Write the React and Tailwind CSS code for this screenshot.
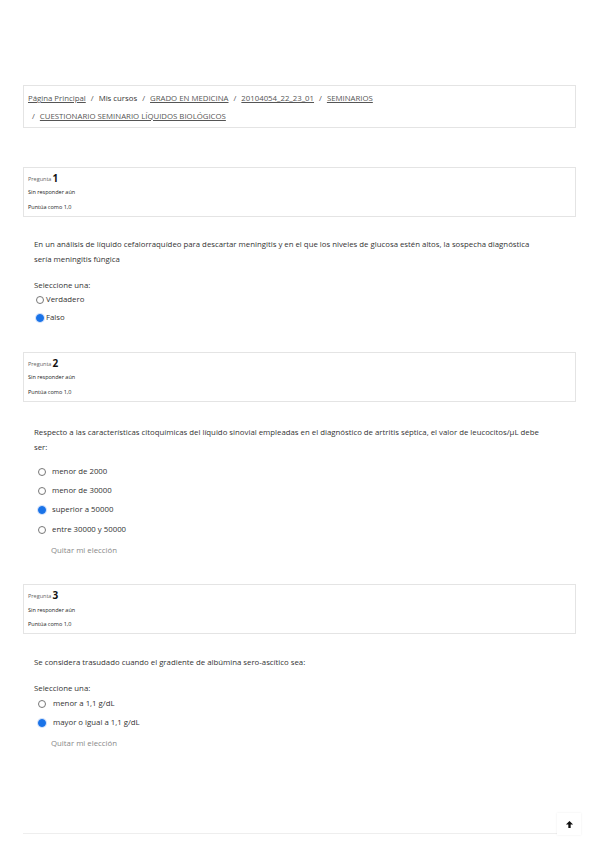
import React from "react";

const font = { fontFamily: '"Open Sans", "Noto Sans", sans-serif' };

function Radio({ checked }) {
  return checked ? (
    <span className="inline-block w-[8px] h-[8px] rounded-full bg-[#1a73e8] border border-[#1a73e8] shadow-[0_0_0_1px_#cfe0fb] shrink-0" />
  ) : (
    <span className="inline-block w-[8px] h-[8px] rounded-full border border-[#777] bg-white shrink-0" />
  );
}

function InfoBox({ n, mt }) {
  return (
    <div className={`mx-[23px] border border-[#e4e4e4] h-[50px] px-[4px] flex flex-col ${mt}`}>
      <div className="h-[17px] flex items-end pb-[2px] text-[#666]">
        <span className="text-[5.5px] mr-[1px]">Pregunta</span>
        <span className="text-[10px] font-bold text-[#111] leading-[10px]">{n}</span>
      </div>
      <div className="text-[5.5px] text-[#222] h-[15px] flex items-center">Sin responder aún</div>
      <div className="text-[5.5px] text-[#222] h-[14px] flex items-center">Puntúa como 1,0</div>
    </div>
  );
}

const q = "text-[7.8px] text-[#333]";

export default function App() {
  return (
    <div className="w-[599px] h-[848px] bg-white relative" style={font}>
      <div className="h-[85px]" />
      <div className="mx-[23px] border border-[#e4e4e4] h-[43px] px-[4px] text-[7.8px] text-[#555] flex flex-col">
        <div className="h-[20px] flex items-end pb-[1px]">
          <span className="underline">Página Principal</span>
          <span className="mx-[5px]">/</span>
          <span className="text-[#333]">Mis cursos</span>
          <span className="mx-[5px]">/</span>
          <span className="underline">GRADO EN MEDICINA</span>
          <span className="mx-[5px]">/</span>
          <span className="underline">20104054_22_23_01</span>
          <span className="mx-[5px]">/</span>
          <span className="underline">SEMINARIOS</span>
        </div>
        <div className="h-[21px] flex items-center pl-[4px]">
          <span className="mr-[5px]">/</span>
          <span className="underline">CUESTIONARIO SEMINARIO LÍQUIDOS BIOLÓGICOS</span>
        </div>
      </div>

      <InfoBox n="1" mt="mt-[39px]" />
      <div className={`pl-[34px] pr-[60px] ${q} mt-[20px] leading-[15px]`}>
        En un análisis de líquido cefalorraquídeo para descartar meningitis y en el que los niveles de glucosa estén altos, la sospecha diagnóstica sería meningitis fúngica
      </div>
      <div className={`pl-[34px] ${q} mt-[11px] leading-[15px]`}>Seleccione una:</div>
      <div className={`pl-[36px] ${q} flex items-center gap-[2px] h-[14px]`}>
        <Radio /> <span>Verdadero</span>
      </div>
      <div className={`pl-[36px] ${q} flex items-center gap-[2px] h-[18px] mt-[2px]`}>
        <Radio checked /> <span>Falso</span>
      </div>

      <InfoBox n="2" mt="mt-[25px]" />
      <div className={`pl-[34px] pr-[60px] ${q} mt-[23px] leading-[15px]`}>
        Respecto a las características citoquímicas del líquido sinovial empleadas en el diagnóstico de artritis séptica, el valor de leucocitos/µL debe ser:
      </div>
      <div className="mt-[7px] flex flex-col">
        {[
          ["menor de 2000", false],
          ["menor de 30000", false],
          ["superior a 50000", true],
          ["entre 30000 y 50000", false],
        ].map(([t, c]) => (
          <div key={t} className={`pl-[38px] h-[19.3px] flex items-center gap-[6px] ${q}`}>
            <Radio checked={c} />
            <span>{t}</span>
          </div>
        ))}
      </div>
      <div className="pl-[51px] text-[7.8px] text-[#888] h-[24px] flex items-center">Quitar mi elección</div>

      <InfoBox n="3" mt="mt-[21px]" />
      <div className={`pl-[34px] ${q} mt-[21px] leading-[15px]`}>
        Se considera trasudado cuando el gradiente de albúmina sero-ascítico sea:
      </div>
      <div className={`pl-[34px] ${q} mt-[11px] leading-[15px]`}>Seleccione una:</div>
      <div className="flex flex-col -mt-[2px]">
        {[
          ["menor a 1,1 g/dL", false],
          ["mayor o igual a 1,1 g/dL", true],
        ].map(([t, c]) => (
          <div key={t} className={`pl-[38px] h-[19px] flex items-center gap-[7px] ${q}`}>
            <Radio checked={c} />
            <span>{t}</span>
          </div>
        ))}
      </div>
      <div className="pl-[51px] text-[7.8px] text-[#888] h-[24px] flex items-center">Quitar mi elección</div>

      <div className="absolute left-[23px] right-[23px] top-[833px] border-t border-[#eeeeee]" />
      <div className="absolute left-[557px] top-[813px] w-[24px] h-[22px] bg-white shadow-[0_0_2px_rgba(0,0,0,0.08)] flex items-center justify-center">
        <svg width="9" height="9" viewBox="0 0 10 10">
          <path d="M5 1 L9 5 L6.3 5 L6.3 9 L3.7 9 L3.7 5 L1 5 Z" fill="#111" />
        </svg>
      </div>
    </div>
  );
}
